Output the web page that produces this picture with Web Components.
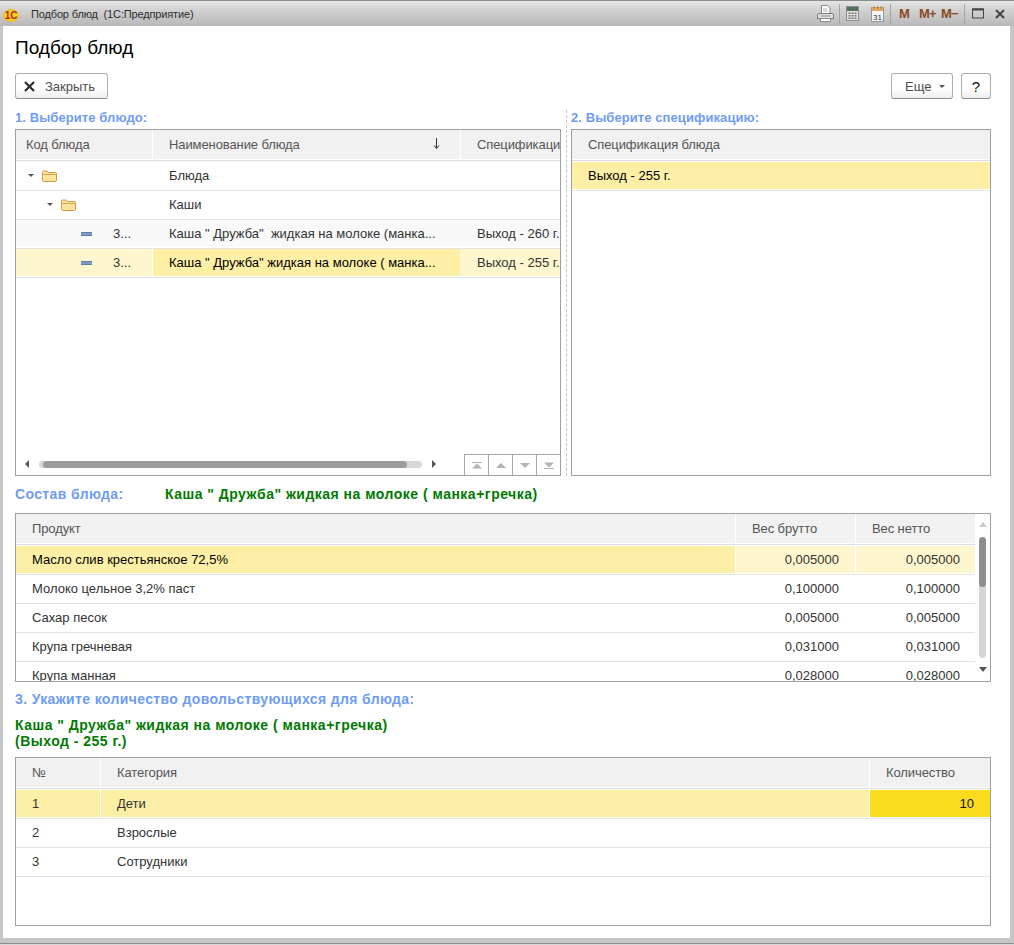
<!DOCTYPE html>
<html lang="ru">
<head>
<meta charset="utf-8">
<title>Подбор блюд</title>
<style>
html, body { margin: 0; height: 945px; overflow: hidden; background: #d8d8d8; }
body { font: 13px "Liberation Sans", Arial, sans-serif; color: #333; }
</style>
</head>
<body>
<app-window>
  <span slot="title">Подбор блюд&nbsp; (1С:Предприятие)</span>

  <form-title>Подбор блюд</form-title>

  <form-toolbar>
    <form-button icon="close">Закрыть</form-button>
    <form-button slot="end" menu>Еще</form-button>
    <form-button slot="end" square>?</form-button>
  </form-toolbar>

  <split-pane>
    <div slot="left">
      <group-label>1. Выберите блюдо:</group-label>
      <data-grid cols="136px 308px 160px" height="347" first-pad="10">
        <grid-row head>
          <grid-cell>Код блюда</grid-cell>
          <grid-cell sort>Наименование блюда</grid-cell>
          <grid-cell>Спецификация</grid-cell>
        </grid-row>
        <grid-row>
          <grid-cell><tree-mark level="0" kind="folder"></tree-mark></grid-cell>
          <grid-cell>Блюда</grid-cell>
          <grid-cell></grid-cell>
        </grid-row>
        <grid-row>
          <grid-cell><tree-mark level="1" kind="folder"></tree-mark></grid-cell>
          <grid-cell>Каши</grid-cell>
          <grid-cell></grid-cell>
        </grid-row>
        <grid-row tint>
          <grid-cell><tree-mark level="2" kind="item">3...</tree-mark></grid-cell>
          <grid-cell>Каша " Дружба"&nbsp; жидкая на молоке (манка...</grid-cell>
          <grid-cell>Выход - 260 г.</grid-cell>
        </grid-row>
        <grid-row light>
          <grid-cell><tree-mark level="2" kind="item">3...</tree-mark></grid-cell>
          <grid-cell current dark>Каша " Дружба" жидкая на молоке ( манка...</grid-cell>
          <grid-cell>Выход - 255 г.</grid-cell>
        </grid-row>
        <grid-hscroll slot="footer"></grid-hscroll>
      </data-grid>
    </div>
    <div slot="right">
      <group-label>2. Выберите спецификацию:</group-label>
      <data-grid cols="1fr" height="347">
        <grid-row head>
          <grid-cell>Спецификация блюда</grid-cell>
        </grid-row>
        <grid-row selected>
          <grid-cell dark>Выход - 255 г.</grid-cell>
        </grid-row>
      </data-grid>
    </div>
  </split-pane>

  <composition-head>
    <group-label wide>Состав блюда:</group-label>
    <green-note slot="note">Каша " Дружба" жидкая на молоке ( манка+гречка)</green-note>
  </composition-head>

  <data-grid cols="719px 120px 121px" height="169" vscroll>
    <grid-row head>
      <grid-cell>Продукт</grid-cell>
      <grid-cell>Вес брутто</grid-cell>
      <grid-cell>Вес нетто</grid-cell>
    </grid-row>
    <grid-row>
      <grid-cell current dark>Масло слив крестьянское 72,5%</grid-cell>
      <grid-cell right light>0,005000</grid-cell>
      <grid-cell right light>0,005000</grid-cell>
    </grid-row>
    <grid-row>
      <grid-cell>Молоко цельное 3,2% паст</grid-cell>
      <grid-cell right>0,100000</grid-cell>
      <grid-cell right>0,100000</grid-cell>
    </grid-row>
    <grid-row>
      <grid-cell>Сахар песок</grid-cell>
      <grid-cell right>0,005000</grid-cell>
      <grid-cell right>0,005000</grid-cell>
    </grid-row>
    <grid-row>
      <grid-cell>Крупа гречневая</grid-cell>
      <grid-cell right>0,031000</grid-cell>
      <grid-cell right>0,031000</grid-cell>
    </grid-row>
    <grid-row>
      <grid-cell>Крупа манная</grid-cell>
      <grid-cell right>0,028000</grid-cell>
      <grid-cell right>0,028000</grid-cell>
    </grid-row>
  </data-grid>

  <amount-head>
    <group-label wide>3. Укажите количество довольствующихся для блюда:</group-label>
    <green-note>Каша " Дружба" жидкая на молоке ( манка+гречка)<br>(Выход - 255 г.)</green-note>
  </amount-head>

  <data-grid cols="84px 769px 1fr" height="169">
    <grid-row head>
      <grid-cell>№</grid-cell>
      <grid-cell>Категория</grid-cell>
      <grid-cell>Количество</grid-cell>
    </grid-row>
    <grid-row>
      <grid-cell current>1</grid-cell>
      <grid-cell current>Дети</grid-cell>
      <grid-cell right editing>10</grid-cell>
    </grid-row>
    <grid-row>
      <grid-cell>2</grid-cell>
      <grid-cell>Взрослые</grid-cell>
      <grid-cell></grid-cell>
    </grid-row>
    <grid-row>
      <grid-cell>3</grid-cell>
      <grid-cell>Сотрудники</grid-cell>
      <grid-cell></grid-cell>
    </grid-row>
  </data-grid>
</app-window>

<script>
// small helper, every element below is just a shadow root filled from a string
function shadow(el, html) {
  el.attachShadow({ mode: "open" }).innerHTML = html;
}

const ICONS = {
  printer: `<svg width="17" height="17" viewBox="0 0 17 17"><path d="M4.500 .5h6l2.500 2.500v5.500h-8.500z" fill="#fff" stroke="#8a8a8a"/><path d="M6 4h4M6 6h5" stroke="#b5b5b5"/><path d="M1.500 8.500h14l1 1.500v3.500h-16v-3.500z" fill="#e3e3e3" stroke="#777"/><path d="M3.500 11h10" stroke="#888"/><path d="M3.500 13.500h10v3h-10z" fill="#fff" stroke="#8a8a8a"/></svg>`,
  calc: `<svg width="13" height="15" viewBox="0 0 13 15"><rect x=".5" y=".5" width="12" height="14" fill="#dfe2dd" stroke="#8c8f8a"/><rect x="1" y="1" width="11" height="4" fill="#4e7259"/><path d="M2.500 6.500h2v1.500h-2zM5.500 6.500h2v1.500h-2zM8.500 6.500h2v1.500h-2zM2.500 9h2v1.500h-2zM5.500 9h2v1.500h-2zM8.500 9h2v1.500h-2zM2.500 11.500h2v1.500h-2zM5.500 11.500h2v1.500h-2zM8.500 11.500h2v1.500h-2z" fill="#777"/></svg>`,
  calendar: `<svg width="13" height="16" viewBox="0 0 13 16"><rect x=".5" y="1.500" width="12" height="14" fill="#f4f6f6" stroke="#8f9a9a"/><rect x="1" y="1" width="11" height="4" fill="#e8a45c"/><path d="M3 .5v2M6.500 .5v2M10 .5v2" stroke="#8a6a3c"/><text x="6.500" y="13.500" text-anchor="middle" font-family="Liberation Sans" font-size="8" fill="#333">31</text></svg>`,
  close: `<svg width="11" height="11" viewBox="0 0 11 11"><path d="M1 1l9 9M10 1l-9 9" stroke="#2b2b2b" stroke-width="2.200"/></svg>`,
  winMax: `<svg width="12" height="11" viewBox="0 0 12 11"><rect x=".5" y="1" width="11" height="9" fill="none" stroke="#444"/><path d="M0 1.500h12" stroke="#444" stroke-width="2"/></svg>`,
  winClose: `<svg width="10" height="10" viewBox="0 0 10 10"><path d="M1 1l8 8M9 1l-8 8" stroke="#444" stroke-width="2"/></svg>`,
  logo: `<svg width="16" height="13" viewBox="0 0 16 13"><ellipse cx="8" cy="6.500" rx="7.500" ry="6" fill="#fbd22a" stroke="#eab81e"/><text x="8" y="10" text-anchor="middle" font-family="Liberation Sans" font-weight="bold" font-size="10" fill="#b3261b">1С</text></svg>`
};

class AppWindow extends HTMLElement {
  constructor() {
    super();
    const tool = (s, w) => `<span class="tool" style="width:${w}px">${s}</span>`;
    shadow(this, `
      <style>
        :host { display: block; height: 944px; box-sizing: border-box; padding: 0 4px 0 3px; background: #c6c6c6; border-bottom: 1px solid #8f8f8f; }
        .bar { margin: 0 -4px 0 -3px; height: 26px; box-sizing: border-box; display: flex; align-items: center; padding: 0 4px 0 3px; background: linear-gradient(#e6e6e6, #d2d2d2 35%, #b8b8b8); border-top: 1px solid #8c8c8c; color: #2e2e2e; font-size: 11px; letter-spacing: -.15px; }
        .logo { display: flex; margin: 3px 12px 0 0; }
        .title { flex: 1; margin-top: 1px; }
        .tools { display: flex; align-items: center; height: 25px; letter-spacing: 0; }
        .tool { display: flex; justify-content: center; align-items: center; height: 25px; }
        .m { color: #8a4a25; font: bold 13px "Liberation Sans", sans-serif; letter-spacing: -.6px; }
        .sep { width: 1px; height: 20px; background: #a4a4a4; }
        .body { background: #fff; height: 912px; box-sizing: border-box; padding: 0 19px 0 12px; }
      </style>
      <div class="bar">
        <span class="logo">${ICONS.logo}</span>
        <span class="title"><slot name="title"></slot></span>
        <span class="tools">
          ${tool(ICONS.printer, 27)}<span class="sep"></span>
          ${tool(ICONS.calc, 24)}
          ${tool(ICONS.calendar, 26)}<span class="sep"></span>
          ${tool('<span class="m">M</span>', 26)}
          ${tool('<span class="m">M+</span>', 21)}
          ${tool('<span class="m">M−</span>', 23)}
          ${tool("", 3)}<span class="sep"></span>
          ${tool(ICONS.winMax, 25)}
          ${tool(ICONS.winClose, 20)}
        </span>
      </div>
      <div class="body"><slot></slot></div>`);
  }
}

class FormTitle extends HTMLElement {
  constructor() {
    super();
    shadow(this, `
      <style>:host { display: block; height: 47px; padding-top: 11px; box-sizing: border-box; font-size: 19px; line-height: 22px; color: #000; }</style>
      <slot></slot>`);
  }
}

class FormToolbar extends HTMLElement {
  constructor() {
    super();
    shadow(this, `
      <style>:host { display: flex; justify-content: space-between; height: 26px; } .end { display: flex; gap: 8px; }</style>
      <slot></slot><div class="end"><slot name="end"></slot></div>`);
  }
}

class FormButton extends HTMLElement {
  constructor() {
    super();
    const icon = this.hasAttribute("icon") ? `<span class="ic">${ICONS.close}</span>` : "";
    const menu = this.hasAttribute("menu") ? `<span class="arr"></span>` : "";
    shadow(this, `
      <style>
        :host { display: inline-flex; align-items: center; box-sizing: border-box; height: 26px; padding: 0 12px 0 8px; gap: 10px; border: 1px solid #adadad; border-bottom-color: #8e8e8e; border-radius: 3px; background: linear-gradient(#fff, #fff 60%, #efefef); color: #4c4c4c; }
        :host([menu]) { width: 62px; padding: 0 0 0 13px; gap: 8px; }
        :host([square]) { width: 30px; padding: 0; justify-content: center; color: #111; font-size: 15px; }
        .ic { display: flex; }
        .arr { border: 3px solid transparent; border-top: 3px solid #555; border-bottom: 0; }
      </style>
      ${icon}<slot></slot>${menu}`);
  }
}

class GroupLabel extends HTMLElement {
  constructor() {
    super();
    shadow(this, `
      <style>
        :host { display: block; font-weight: bold; font-size: 13px; line-height: 15px; letter-spacing: .08px; padding-bottom: 4px; color: #6f9cf3; }
        :host([wide]) { font-size: 14px; letter-spacing: .37px; }
      </style>
      <slot></slot>`);
  }
}

class GreenNote extends HTMLElement {
  constructor() {
    super();
    shadow(this, `
      <style>:host { display: block; font-weight: bold; font-size: 14px; line-height: 16px; letter-spacing: .49px; color: #007a00; }</style>
      <slot></slot>`);
  }
}

class SplitPane extends HTMLElement {
  constructor() {
    super();
    shadow(this, `
      <style>
        :host { display: flex; padding-top: 11px; }
        .l { width: 546px; }
        .gap { width: 10px; display: flex; justify-content: center; }
        .gap i { width: 0; border-left: 1px dashed #c4c4c4; }
        .r { width: 420px; }
      </style>
      <div class="l"><slot name="left"></slot></div>
      <div class="gap"><i></i></div>
      <div class="r"><slot name="right"></slot></div>`);
  }
}

class CompositionHead extends HTMLElement {
  constructor() {
    super();
    shadow(this, `
      <style>
        :host { display: flex; height: 37px; padding-top: 10px; box-sizing: border-box; }
        .a { width: 150px; padding-top: 1px; }
      </style>
      <div class="a"><slot></slot></div><slot name="note"></slot>`);
  }
}

class AmountHead extends HTMLElement {
  constructor() {
    super();
    shadow(this, `
      <style>
        :host { display: flex; flex-direction: column; gap: 6px; height: 75px; padding-top: 10px; box-sizing: border-box; }
      </style>
      <slot></slot>`);
  }
}

class DataGrid extends HTMLElement {
  constructor() {
    super();
    const scroll = this.hasAttribute("vscroll") ? "<grid-vscroll></grid-vscroll>" : "";
    const pad = this.getAttribute("first-pad") || 16;
    shadow(this, `
      <style>
        :host { display: flex; box-sizing: border-box; border: 1px solid #a0a0a0; height: ${this.getAttribute("height")}px; overflow: hidden; background: #fff; --cols: ${this.getAttribute("cols")}; --first-pad: ${pad}px; }
        .main { flex: 1; min-width: 0; display: flex; flex-direction: column; }
        .rows { flex: 1; min-height: 0; overflow: hidden; }
      </style>
      <div class="main">
        <div class="rows"><slot></slot></div>
        <slot name="footer"></slot>
      </div>
      ${scroll}`);
  }
}

class GridRow extends HTMLElement {
  constructor() {
    super();
    // one pixel of white stays between the fill of a row and its line
    shadow(this, `
      <style>
        :host { display: grid; grid-template-columns: var(--cols); height: 29px; box-sizing: border-box; padding-bottom: 1px; background-clip: content-box; border-bottom: 1px solid #e4e4e4; }
        :host([head]) { height: 31px; background-color: #f1f1f1; color: #555; letter-spacing: -.1px; border-bottom-color: #dedede; margin-bottom: 1px; }
        :host([tint]) { background-color: #f9f9f9; }
        :host([light]) { background-color: #fdf6ce; }
        :host([selected]) { background-color: #fdf0a6; }
      </style>
      <slot></slot>`);
  }
}

class GridCell extends HTMLElement {
  constructor() {
    super();
    const sort = this.hasAttribute("sort") ? `<svg class="sort" width="7" height="11" viewBox="0 0 7 11"><path d="M3.500 0v10M1 7.500l2.500 3 2.500-3" fill="none" stroke="#333"/></svg>` : "";
    shadow(this, `
      <style>
        :host { position: relative; display: flex; align-items: center; min-width: 0; box-sizing: border-box; padding: 0 16px; white-space: nowrap; overflow: hidden; border-left: 1px solid transparent; }
        :host(:first-child) { border-left: 0; padding-left: var(--first-pad, 16px); }
        :host-context(grid-row[head]) { border-left-color: #fff; }
        :host([right]) { justify-content: flex-end; }
        :host([light]) { background: #fdf6ce; border-left-color: #fff; }
        :host([current]) { background: #fdf0a6; border-left-color: #fff; }
        :host([dark]) { color: #000; }
        :host([editing]) { background: #f9dc1e; border-left-color: #fff; color: #111; }
        .sort { position: absolute; right: 20px; top: 8px; }
      </style>
      <slot></slot>${sort}`);
  }
}

class TreeMark extends HTMLElement {
  constructor() {
    super();
    const level = Number(this.getAttribute("level"));
    let mark;
    if (this.getAttribute("kind") === "folder") {
      mark = `<span class="arr"></span><svg width="15" height="12" viewBox="0 0 15 12"><path d="M.5 2.500c0-1 .5-1.500 1.500-1.500h3l1.500 1.500h7c.5 0 1 .5 1 1v6.500c0 1-.5 1.500-1.500 1.500h-11c-1 0-1.500-.5-1.500-1.500z" fill="#fde4a0" stroke="#d19a3f"/><path d="M1 4.500h13" stroke="#d9a650"/></svg>`;
    } else {
      mark = `<span class="dash"></span>`;
    }
    shadow(this, `
      <style>
        :host { display: flex; align-items: center; margin-left: ${2 + level * 19}px; }
        .arr { border: 3px solid transparent; border-top: 3px solid #555; border-bottom: 0; margin-right: 8px; }
        .dash { width: 11px; height: 4px; margin: 0 21px 0 15px; background: #7f9cc9; border: 1px solid #5f7ea8; border-left: 0; border-right: 0; box-sizing: border-box; }
      </style>
      ${mark}<slot></slot>`);
  }
}

class GridHscroll extends HTMLElement {
  constructor() {
    super();
    const nav = (d) => `<span class="nav"><svg width="14" height="9" viewBox="0 0 14 9"><path d="${d}" fill="#b4b4b4"/></svg></span>`;
    shadow(this, `
      <style>
        :host { display: flex; align-items: flex-end; height: 22px; flex: none; }
        .bar { flex: 1; display: flex; align-items: center; height: 22px; padding: 0 0 0 9px; }
        .a { border: 4px solid transparent; border-left: 0; border-right: 4px solid #555; margin-right: 10px; }
        .b { border: 4px solid transparent; border-right: 0; border-left: 4px solid #555; margin-left: 10px; }
        .track { width: 383px; height: 7px; border-radius: 4px; background: #d8d8d8; padding-left: 4px; box-sizing: border-box; }
        .thumb { display: block; width: 364px; height: 7px; border-radius: 4px; background: #9c9c9c; }
        .nav { width: 24px; height: 21px; box-sizing: border-box; display: flex; align-items: center; justify-content: center; border: 1px solid #a8a8a8; border-bottom: 0; border-right: 0; }
      </style>
      <div class="bar"><span class="a"></span><span class="track"><span class="thumb"></span></span><span class="b"></span></div>
      ${nav("M2 1h10v1h-10zM7 2.500l5 5h-10z")}
      ${nav("M7 2l5 5h-10z")}
      ${nav("M2 2h10l-5 5z")}
      ${nav("M2 1.500h10l-5 5zM2 7h10v1h-10z")}`);
  }
}

class GridVscroll extends HTMLElement {
  constructor() {
    super();
    shadow(this, `
      <style>
        :host { display: flex; flex-direction: column; align-items: center; width: 15px; flex: none; padding: 8px 0 9px; box-sizing: border-box; }
        .up { border: 4px solid transparent; border-top: 0; border-bottom: 5px solid #c8c8c8; }
        .down { border: 4px solid transparent; border-bottom: 0; border-top: 5px solid #555; }
        .track { flex: 1; width: 7px; margin: 10px 0 9px; border-radius: 4px; background: #d6d6d6; }
        .thumb { display: block; height: 50px; border-radius: 4px; background: #8f8f8f; }
      </style>
      <span class="up"></span><span class="track"><span class="thumb"></span></span><span class="down"></span>`);
  }
}

customElements.define("app-window", AppWindow);
customElements.define("form-title", FormTitle);
customElements.define("form-toolbar", FormToolbar);
customElements.define("form-button", FormButton);
customElements.define("group-label", GroupLabel);
customElements.define("green-note", GreenNote);
customElements.define("split-pane", SplitPane);
customElements.define("composition-head", CompositionHead);
customElements.define("amount-head", AmountHead);
customElements.define("data-grid", DataGrid);
customElements.define("grid-row", GridRow);
customElements.define("grid-cell", GridCell);
customElements.define("tree-mark", TreeMark);
customElements.define("grid-hscroll", GridHscroll);
customElements.define("grid-vscroll", GridVscroll);
</script>
</body>
</html>
